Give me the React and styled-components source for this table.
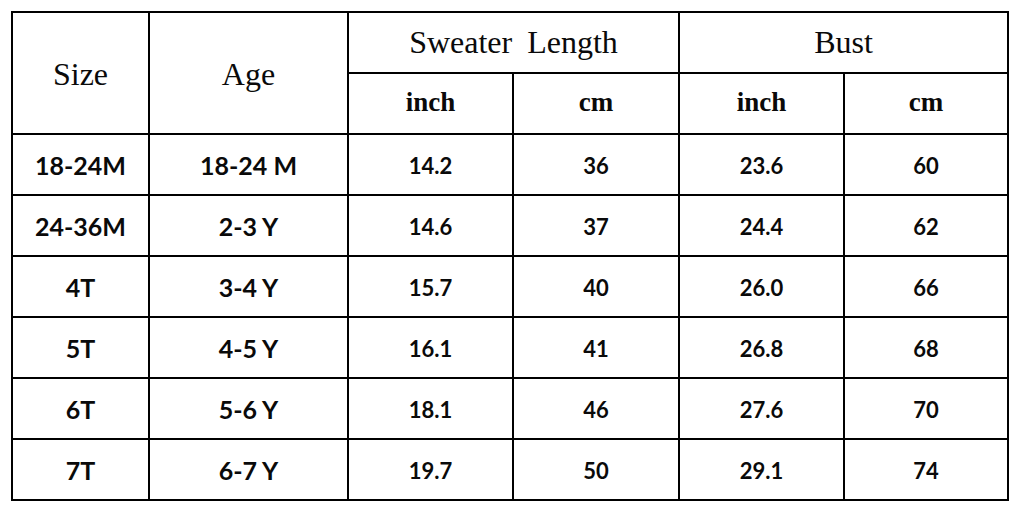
import styled, { createGlobalStyle } from 'styled-components'

const GlobalStyle = createGlobalStyle`
  html, body {
    margin: 0;
    padding: 0;
    background: #fff;
  }
  body {
    width: 1021px;
    height: 511px;
    overflow: hidden;
  }
`

const rows = [
  { size: '18-24M', age: '18-24 M', lenIn: '14.2', lenCm: '36', bustIn: '23.6', bustCm: '60' },
  { size: '24-36M', age: '2-3 Y', lenIn: '14.6', lenCm: '37', bustIn: '24.4', bustCm: '62' },
  { size: '4T', age: '3-4 Y', lenIn: '15.7', lenCm: '40', bustIn: '26.0', bustCm: '66' },
  { size: '5T', age: '4-5 Y', lenIn: '16.1', lenCm: '41', bustIn: '26.8', bustCm: '68' },
  { size: '6T', age: '5-6 Y', lenIn: '18.1', lenCm: '46', bustIn: '27.6', bustCm: '70' },
  { size: '7T', age: '6-7 Y', lenIn: '19.7', lenCm: '50', bustIn: '29.1', bustCm: '74' },
]

export default function App() {
  return (
    <>
      <GlobalStyle />
      <Page>
        <Chart>
          <HeadCell $rows={2} $shift={3}>Size</HeadCell>
          <HeadCell $rows={2} $shift={3}>Age</HeadCell>
          <HeadCell $cols={2} $spaced>Sweater Length</HeadCell>
          <HeadCell $cols={2}>Bust</HeadCell>
          <UnitCell>inch</UnitCell>
          <UnitCell>cm</UnitCell>
          <UnitCell>inch</UnitCell>
          <UnitCell>cm</UnitCell>

          {rows.map(r => (
            <Row key={r.size}>
              <DataCell $big>{r.size}</DataCell>
              <DataCell $big>{r.age}</DataCell>
              <DataCell>{r.lenIn}</DataCell>
              <DataCell>{r.lenCm}</DataCell>
              <DataCell>{r.bustIn}</DataCell>
              <DataCell>{r.bustCm}</DataCell>
            </Row>
          ))}
        </Chart>
      </Page>
    </>
  )
}

const Page = styled.div`
  padding: 11px 0 0 11px;
`

const Chart = styled.div`
  display: grid;
  width: 998px;
  box-sizing: border-box;
  grid-template-columns: 135px 197px 163px 164px 163px 162px;
  grid-auto-rows: 59px;
  gap: 2px;
  padding: 2px;
  background: #000;
  color: #0a0a0a;
`

const Row = styled.div`
  display: contents;
`

const Cell = styled.div`
  background: #fff;
  display: flex;
  align-items: center;
  justify-content: center;
  white-space: nowrap;
`

const HeadCell = styled(Cell)`
  grid-row: ${p => (p.$rows ? `span ${p.$rows}` : 'auto')};
  grid-column: ${p => (p.$cols ? `span ${p.$cols}` : 'auto')};
  padding-top: ${p => p.$shift || 0}px;
  font-family: "Liberation Serif", "Times New Roman", serif;
  font-size: 32px;
  font-weight: 400;
  word-spacing: ${p => (p.$spaced ? '7px' : 'normal')};
`

const UnitCell = styled(Cell)`
  padding-bottom: 3px;
  font-family: "Liberation Serif", "Times New Roman", serif;
  font-size: 27px;
  font-weight: 700;
`

const DataCell = styled(Cell)`
  font-family: Lato, "Open Sans", sans-serif;
  font-weight: 700;
  font-size: ${p => (p.$big ? '25px' : '22px')};
  padding-top: 1px;
`
